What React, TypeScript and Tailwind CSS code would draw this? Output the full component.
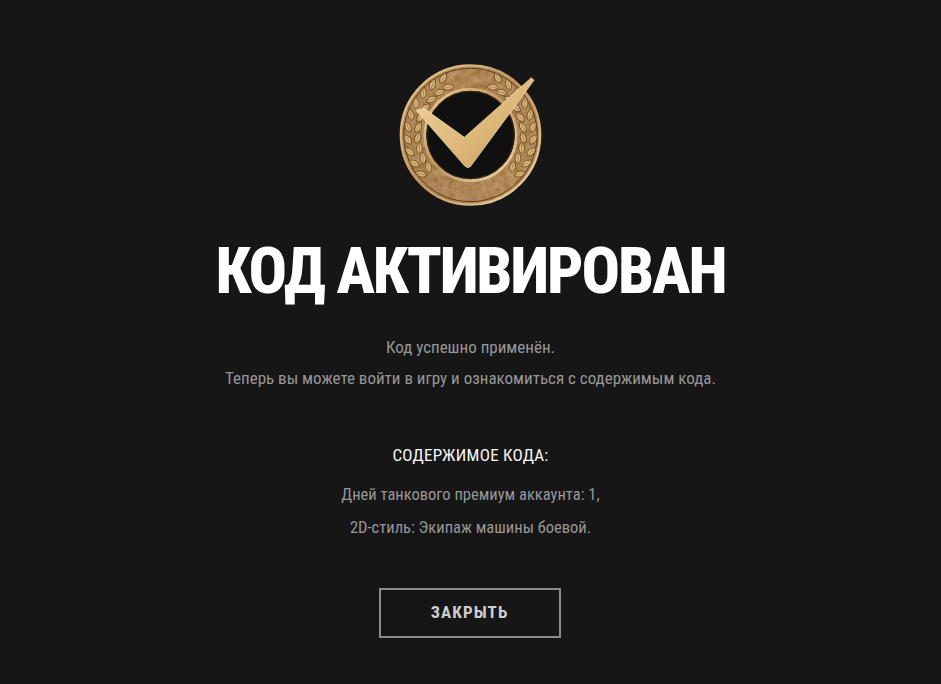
import React from "react";

const CX = 268.5;
const CY = 255;

function Wreath() {
  const leaves: React.ReactNode[] = [];
  for (let i = 0; i < 10; i++) {
    const phi = 47 + i * 11.4;
    const rad = (phi * Math.PI) / 180;
    [
      { r: 180, a: phi - 90 - 28 },
      { r: 166, a: phi - 90 + 28 },
    ].forEach((l, j) => {
      const x = CX - l.r * Math.sin(rad);
      const y = CY + l.r * Math.cos(rad);
      leaves.push(
        <g key={`${i}-${j}`} transform={`translate(${x} ${y}) rotate(${l.a})`}>
          <path d="M0 0C-11 -9 -12 -23 0 -36C12 -23 11 -9 0 0Z" fill="#dcb87c" stroke="#5f3e18" strokeWidth="2.2" />
          <path d="M0 -4L0 -30" stroke="#7a5526" strokeWidth="1.5" />
        </g>,
      );
    });
  }
  return <g>{leaves}</g>;
}

function Medal() {
  return (
    <svg width="180" height="170" viewBox="0 0 540 510" className="block">
      <defs>
        <linearGradient id="ring" x1="0" y1="0" x2="1" y2="1">
          <stop offset="0" stopColor="#a97c43" />
          <stop offset="0.5" stopColor="#9c6f39" />
          <stop offset="1" stopColor="#a97d45" />
        </linearGradient>
        <linearGradient id="edge" x1="0" y1="0" x2="1" y2="1">
          <stop offset="0" stopColor="#ecd09a" />
          <stop offset="0.5" stopColor="#c29660" />
          <stop offset="1" stopColor="#f3dcac" />
        </linearGradient>
        <linearGradient id="check" x1="0" y1="0" x2="1" y2="1">
          <stop offset="0" stopColor="#efd49c" />
          <stop offset="0.6" stopColor="#dcb677" />
          <stop offset="1" stopColor="#c49a5a" />
        </linearGradient>
        <filter id="grain" x="-5%" y="-5%" width="110%" height="110%">
          <feTurbulence type="fractalNoise" baseFrequency="0.05" numOctaves="3" seed="4" />
          <feColorMatrix values="0 0 0 0 0.88  0 0 0 0 0.68  0 0 0 0 0.42  0.45 0 0 0 -0.1" />
          <feComposite in2="SourceAlpha" operator="in" />
          <feBlend in2="SourceGraphic" mode="normal" />
        </filter>
      </defs>
      <circle cx={CX} cy={CY} r="210" fill="url(#ring)" filter="url(#grain)" />
      <circle cx={CX} cy={CY} r="209" fill="none" stroke="url(#edge)" strokeWidth="7" />
      <circle cx={CX} cy={CY} r="200" fill="none" stroke="#5f3e18" strokeWidth="3" />
      <Wreath />
      <g transform={`translate(${CX * 2} 0) scale(-1 1)`}>
        <Wreath />
      </g>
      <circle cx={CX} cy={CY} r="137" fill="#101010" stroke="url(#edge)" strokeWidth="8" />
      <circle cx={CX} cy={CY} r="131" fill="none" stroke="#3f2810" strokeWidth="3" />
      <path d="M105 181L129 175L250 262L451 83L459 91L269 349L261 353L252 349Z" fill="url(#check)" stroke="#f5e3ba" strokeWidth="2" strokeLinejoin="round" />
    </svg>
  );
}

export default function App() {
  const font = "font-['Roboto','Liberation_Sans',sans-serif] [font-stretch:75%]";
  return (
    <div className={`min-h-[684px] bg-[#161616] flex flex-col items-center pt-[50px] ${font}`}>
      <Medal />
      <h1 className="mt-[17px] text-[64px] leading-[70px] font-extrabold tracking-[-2.1px] text-white">КОД АКТИВИРОВАН</h1>
      <p className="mt-[25px] text-[17px] leading-[31px] text-[#979797] text-center">
        Код успешно применён.
        <br />
        Теперь вы можете войти в игру и ознакомиться с содержимым кода.
      </p>
      <h2 className="mt-[51px] text-[17px] leading-5 font-normal tracking-[0.25px] text-[#f7f7f7]">СОДЕРЖИМОЕ КОДА:</h2>
      <p className="mt-[13px] text-[16.5px] leading-[33px] text-[#979797] text-center">
        Дней танкового премиум аккаунта: 1,
        <br />
        2D-стиль: Экипаж машины боевой.
      </p>
      <button className="mt-[44px] w-[182px] h-[50px] -translate-x-px border-2 border-[#8c8c8c] text-[#cfcfcf] text-[17px] font-bold tracking-[1.1px]">
        ЗАКРЫТЬ
      </button>
    </div>
  );
}
